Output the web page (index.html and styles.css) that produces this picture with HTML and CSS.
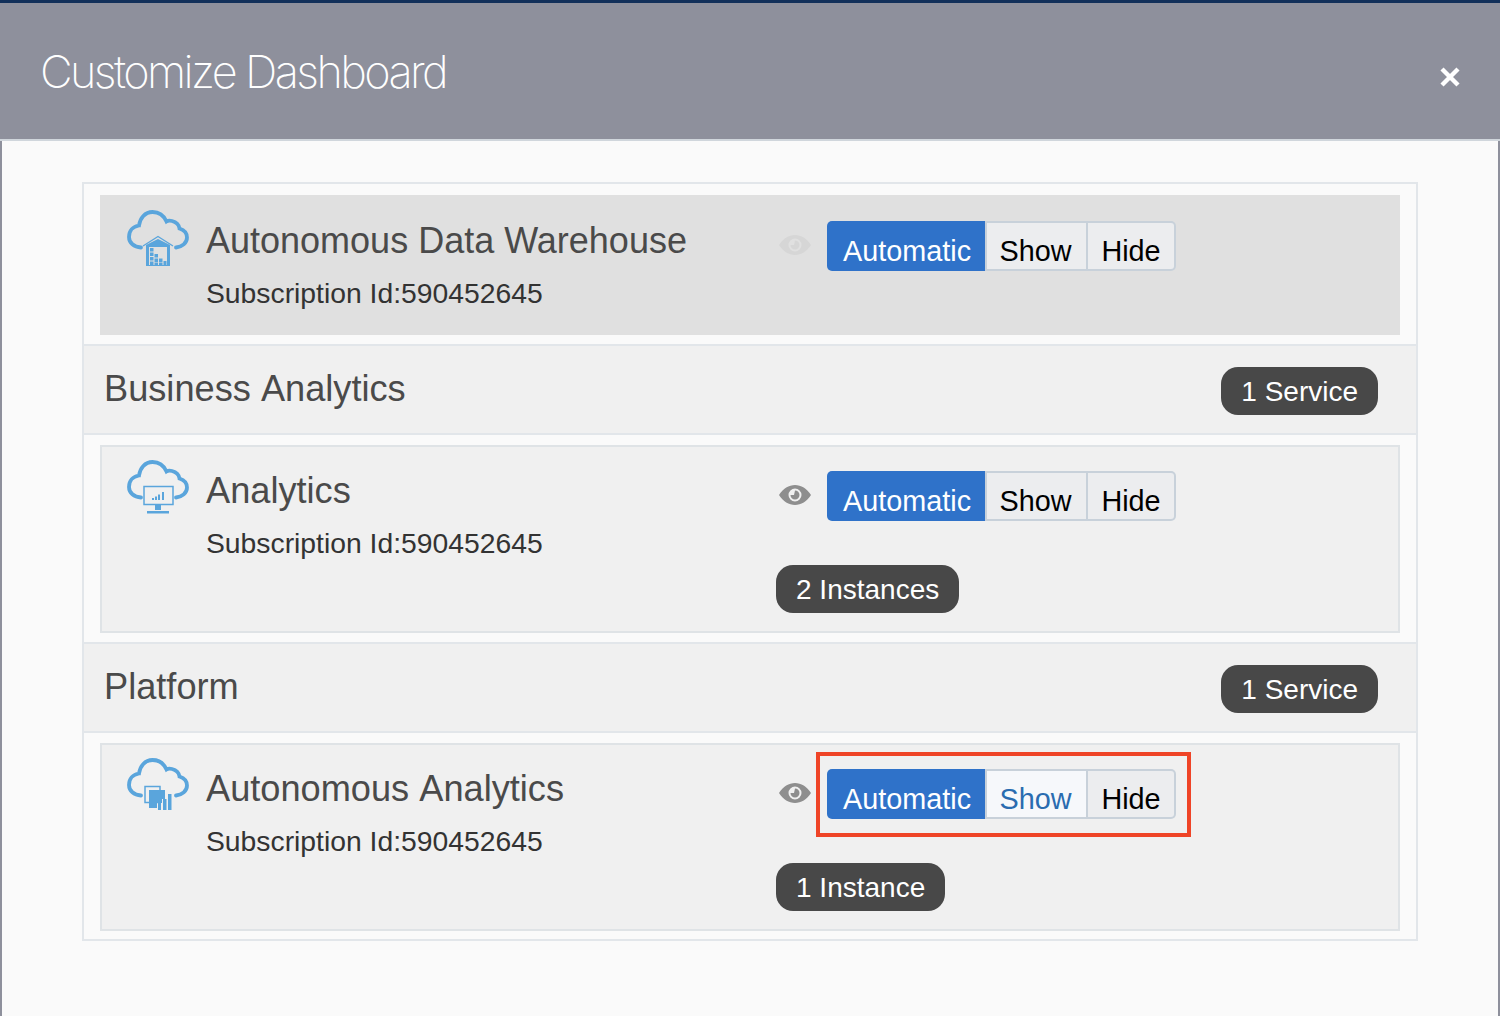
FILE: index.html
```html
<!DOCTYPE html>
<html lang="en">

<head>
    <meta charset="UTF-8">
    <meta name="viewport" content="width=device-width, initial-scale=1.0">
    <title>Customize Dashboard</title>
    <link rel="stylesheet" href="styles.css">
</head>

<body>
    <svg class="defs" width="0" height="0">
        <symbol id="cloud" viewBox="0 0 62 58">
            <path d="M14 37.500C7 37 2 33 2 27 2 21 6 16.500 12 15.500 13 8 18 2 25.500 2 32 2 37 6 39.500 11.500 41 10.500 43 10.500 45 11 49 12 52 15 52.500 18.500 57 20 60 23 60 27.500 60 33 55 37 49 37.500" fill="none" stroke="#5aa5dc" stroke-width="3.800" stroke-linecap="round" />
        </symbol>
        <symbol id="eye" viewBox="0 0 32 20">
            <path fill-rule="evenodd" d="M0 10C4 3.500 10 0 16 0S28 3.500 32 10C28 16.500 22 20 16 20S4 16.500 0 10ZM16 3.500A6.500 6.500 0 1 0 16 16.500 6.500 6.500 0 1 0 16 3.500Z" />
            <path d="M16 5.500A4.500 4.500 0 1 1 11.500 10L15 10Z" />
        </symbol>
    </svg>

    <div class="modal">
        <header class="modal_head">
            <h1>Customize Dashboard</h1>
            <svg class="close" viewBox="0 0 20 20" width="20" height="20">
                <path d="M2 2L18 18M18 2L2 18" stroke="#fff" stroke-width="4.400" />
            </svg>
        </header>

        <section class="list">
            <div class="wrap first">
                <div class="card off">
                    <svg class="icon" viewBox="0 0 62 58" width="62" height="58">
                        <use href="#cloud" />
                        <path d="M16 36L31 26.500 46 36" fill="none" stroke="#5aa5dc" stroke-width="1.300" />
                        <path fill="#5aa5dc" d="M19 35L31 29 43 35V56H19Z" />
                        <path fill="#e0e0e0" d="M22 37h18v18H22z" />
                        <path fill="#5aa5dc" d="M23 38h3.500v3.500H23zM23 42.500h3.500V46H23zM27.500 44h3.500v3.500h-3.500zM23 47h3.500v3.500H23zM32 48.500h3.500V52H32zM27.500 48.500h3.500V52h-3.500zM23 51.500h3.500V55H23zM27.500 52.500h3.500V55h-3.500zM32 52.500h3.500V55H32zM36.500 51h3V55h-3z" />
                    </svg>
                    <div class="info">
                        <h2>Autonomous Data Warehouse</h2>
                        <p>Subscription Id:590452645</p>
                    </div>
                    <div class="controls">
                        <div class="control_row">
                            <svg class="eye faded" width="32" height="20"><use href="#eye" /></svg>
                            <div class="btns">
                                <button class="active">Automatic</button>
                                <button>Show</button>
                                <button>Hide</button>
                            </div>
                        </div>
                    </div>
                </div>
            </div>

            <div class="group">
                <h2 class="spaced">Business Analytics</h2>
                <span class="badge">1 Service</span>
            </div>

            <div class="wrap">
                <div class="card">
                    <svg class="icon" viewBox="0 0 62 58" width="62" height="58">
                        <use href="#cloud" />
                        <rect x="17" y="26.500" width="29" height="18" fill="#f0f0f0" stroke="#5aa5dc" stroke-width="1.500" />
                        <path fill="#5aa5dc" d="M25 38h2v2h-2zM28 36.500h2V40h-2zM31 34.500h2V40h-2zM35 32h2v8h-2zM28 45h6v5h-6zM20 51h22v2.500H20z" />
                    </svg>
                    <div class="info">
                        <h2>Analytics</h2>
                        <p>Subscription Id:590452645</p>
                    </div>
                    <div class="controls">
                        <div class="control_row">
                            <svg class="eye" width="32" height="20"><use href="#eye" /></svg>
                            <div class="btns">
                                <button class="active">Automatic</button>
                                <button>Show</button>
                                <button>Hide</button>
                            </div>
                        </div>
                        <span class="badge">2 Instances</span>
                    </div>
                </div>
            </div>

            <div class="group">
                <h2>Platform</h2>
                <span class="badge">1 Service</span>
            </div>

            <div class="wrap">
                <div class="card">
                    <svg class="icon" viewBox="0 0 62 58" width="62" height="58">
                        <use href="#cloud" />
                        <rect x="18" y="28.500" width="15" height="16" fill="#f0f0f0" stroke="#5aa5dc" stroke-width="1.500" />
                        <path fill="#5aa5dc" d="M22 32h16v9h-3v4h-5v5h-8z" />
                        <path fill="#5aa5dc" d="M31 45h3v7h-3zM36 41h3.500v11H36zM41 36h3.500v16H41z" />
                    </svg>
                    <div class="info">
                        <h2 class="spaced">Autonomous Analytics</h2>
                        <p>Subscription Id:590452645</p>
                    </div>
                    <div class="controls">
                        <div class="control_row">
                            <svg class="eye" width="32" height="20"><use href="#eye" /></svg>
                            <div class="btns">
                                <button class="active">Automatic</button>
                                <button class="hover">Show</button>
                                <button>Hide</button>
                                <div class="marker"></div>
                            </div>
                        </div>
                        <span class="badge">1 Instance</span>
                    </div>
                </div>
            </div>
        </section>
    </div>
</body>

</html>
```

FILE: styles.css
```css
* {
    box-sizing: border-box;
}

html,
body {
    margin: 0;
    height: 100%;
    overflow: hidden;
}

body {
    font-family: "Liberation Sans", Arial, sans-serif;
    background-color: #fafafa;
}

.defs {
    display: block;
    height: 0;
}

.modal {
    height: 1016px;
    border-left: 2px solid #8e909c;
    border-right: 2px solid #8e909c;
    background-color: #fafafa;
}

.modal_head {
    height: 141px;
    margin: 0 -2px;
    padding: 0 40px;
    border-top: 3px solid #12305a;
    border-bottom: 2px solid #d0d6dc;
    background-color: #8e909c;
    display: flex;
    justify-content: space-between;
    align-items: flex-start;
}

.modal_head h1 {
    margin: 40px 0 0;
    font-family: Inter, sans-serif;
    font-weight: 200;
    font-size: 45px;
    line-height: 58px;
    letter-spacing: -2.6px;
    color: #fff;
}

.close {
    margin-top: 64px;
}

.list {
    margin: 41px 80px 0;
    border: 2px solid #e2e6ea;
}

.wrap {
    padding: 10px 16px 9px;
}

.wrap:last-child {
    padding-bottom: 8px;
}

.wrap.first {
    padding: 11px 16px 9px;
}

.group {
    height: 91px;
    padding: 0 38px 0 20px;
    border-top: 2px solid #e2e6ea;
    border-bottom: 2px solid #e2e6ea;
    background-color: #f0f0f0;
    display: flex;
    justify-content: space-between;
    align-items: flex-start;
}

.group h2 {
    margin: 21px 0 0;
}

.group .badge {
    margin-top: 21px;
}

h2 {
    font-size: 36.2px;
    line-height: 44px;
    font-weight: normal;
    color: #4a4a4a;
}

h2.spaced {
    word-spacing: 2px;
}

.card {
    min-height: 188px;
    padding: 13px 0 0 25px;
    border: 2px solid #dfe3e6;
    background-color: #f0f0f0;
    display: flex;
}

.card.off {
    min-height: 140px;
    padding: 15px 0 0 27px;
    border: 0;
    background-color: #e0e0e0;
}

.card.off h2 {
    font-size: 36px;
}

.icon {
    flex: none;
}

.info {
    width: 570px;
    margin-left: 17px;
}

.info h2 {
    margin: 9px 0 0;
}

.info p {
    margin: 12px 0 0;
    font-size: 28.3px;
    line-height: 36px;
    color: #333;
}

.controls {
    display: flex;
    flex-direction: column;
    align-items: flex-start;
    margin-top: 11px;
}

.control_row {
    display: flex;
    align-items: flex-start;
}

.eye {
    margin: 14px 16px 0 3px;
    fill: #8e8e8e;
}

.eye.faded {
    fill: #d6d6d6;
}

.btns {
    position: relative;
    display: flex;
    height: 50px;
}

.btns button {
    height: 50px;
    padding: 10px 0 0;
    border: 2px solid #c8d1da;
    background-color: #ecedef;
    font-family: inherit;
    font-size: 28.8px;
    line-height: 36px;
    color: #000;
}

.btns button:nth-child(2) {
    width: 103px;
    padding-right: 2px;
}

.btns button:nth-child(3) {
    width: 88px;
    border-left: 0;
    border-radius: 0 5px 5px 0;
}

.btns button.active {
    width: 158px;
    border: 0;
    border-radius: 5px 0 0 5px;
    background-color: #2f72c9;
    color: #fff;
    padding: 10px 14px 0 16px;
}

.btns button.hover {
    background-color: #f6f8fb;
    color: #2a6cb0;
}

.marker {
    position: absolute;
    top: -17px;
    left: -11px;
    right: -15px;
    bottom: -18px;
    border: 4px solid #ef4427;
}

.badge {
    height: 48px;
    padding: 0 20px;
    border-radius: 17px;
    background-color: #484848;
    color: #fff;
    font-size: 28px;
    line-height: 50px;
    white-space: nowrap;
}

.controls .badge {
    margin-top: 44px;
}
```
